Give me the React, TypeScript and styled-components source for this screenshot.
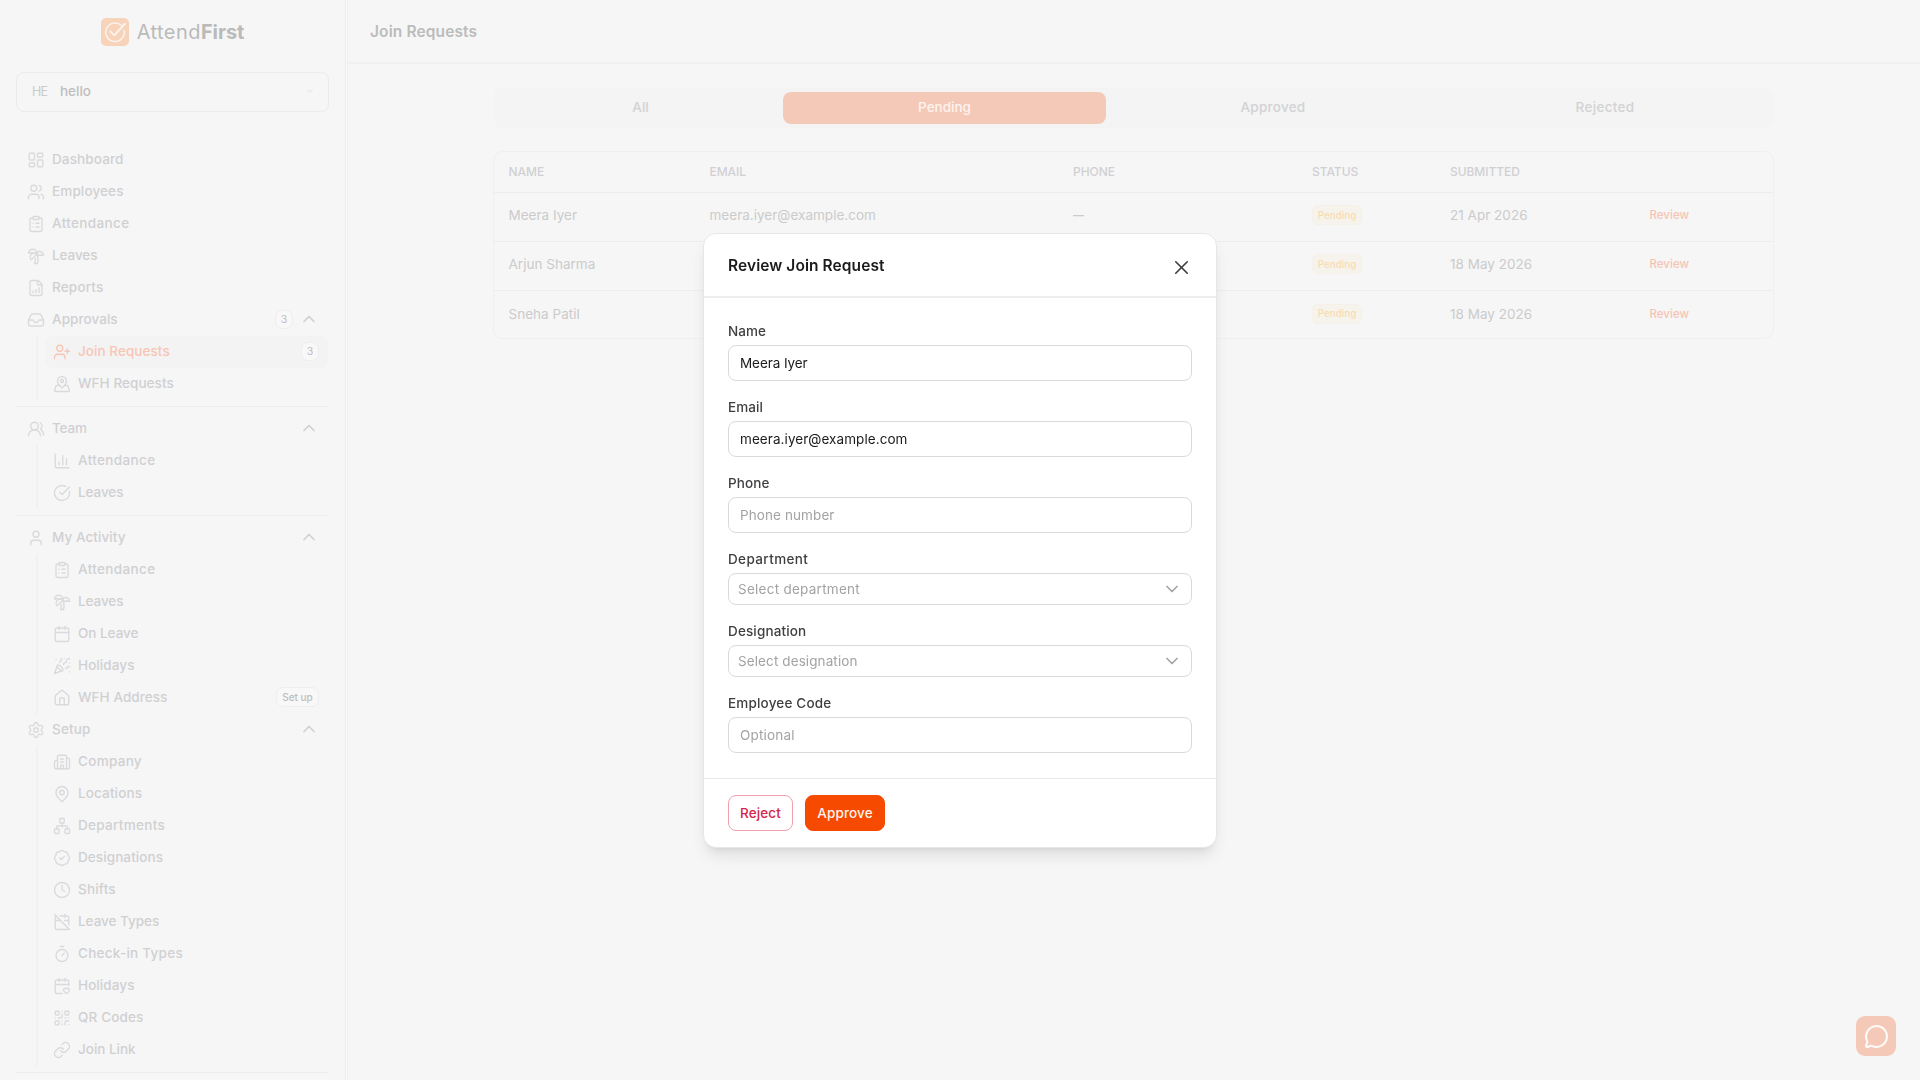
import React from "react";
import styled, { createGlobalStyle, css } from "styled-components";
import {
  BadgeCheck, Building2, Calendar, CalendarHeart, CalendarOff, ChartColumn, ChevronDown, ChevronUp,
  CircleCheckBig, ClipboardList, Clock, FileChartColumnIncreasing, House, Inbox, LayoutDashboard, Link,
  MapPin, MapPinned, MessageCircle, Network, PartyPopper, QrCode, Settings, Timer, TreePalm, User,
  UserPlus, Users, UsersRound, X,
} from "lucide-react";

const GlobalStyle = createGlobalStyle`
  *, *::before, *::after { box-sizing: border-box; }
  body { margin: 0; background: #f6f6f6; font-family: Inter, "Liberation Sans", sans-serif; font-size: 13.5px; }
  button, input { font: inherit; }
`;

const Screen = styled.div`
  display: flex;
  width: 100%;
  height: 1080px;
  overflow: hidden;
  background: #f6f6f6;
`;

/* Sidebar */
const Sidebar = styled.aside`
  flex: none;
  display: flex;
  flex-direction: column;
  width: 348px;
  padding: 12px 18px 0 16px;
  border-right: 1px solid #f1f1f1;
  box-shadow: inset -1px 0 #f8f8f8, inset -2px 0 #eeeeee;
  overflow: hidden;
`;
const Brand = styled.div`
  flex: none;
  display: flex;
  align-items: center;
  justify-content: center;
  gap: 8px;
  height: 40px;
  color: #bababa;
  font-size: 20px;
  letter-spacing: 0.45px;
  b { font-weight: 700; letter-spacing: -0.1px; }
`;
const OrgSelect = styled.div`
  flex: none;
  display: flex;
  align-items: center;
  height: 40px;
  margin-top: 20px;
  padding: 0 13px 2px 15px;
  border: 1px solid #ebebeb;
  border-radius: 8px;
  color: #e0e0e0;
`;
const OrgInitials = styled.span`
  width: 28px;
  color: #cacaca;
  font-size: 12.5px;
  letter-spacing: -0.9px;
`;
const OrgName = styled.span`
  flex: 1;
  color: #bebebe;
  font-weight: 500;
`;
const Nav = styled.nav`
  display: flex;
  flex-direction: column;
  margin-top: 32px;
  width: 312px;
`;
const NavRow = styled.div<{ $sub?: boolean; $active?: boolean }>`
  flex: none;
  display: flex;
  align-items: center;
  gap: 7px;
  height: 32px;
  padding: 0 11px 2px;
  color: #d0d0d2;
  font-weight: 450;
  > svg:first-child { color: #dadadc; flex: none; position: relative; top: 1px; }
  ${(p) => p.$sub && css`padding: 0 9px 2px 8px;`}
  ${(p) => p.$active && css`
    color: #f7c6b5;
    background: #f3f3f3;
    border-radius: 8px;
    > svg:first-child { color: #f7c6b5; }
  `}
`;
const NavText = styled.span<{ $track?: number }>`
  flex: 1;
  white-space: nowrap;
  letter-spacing: ${(p) => (p.$track ?? 0) + 0.06}px;
`;
const SubList = styled.div`
  display: flex;
  flex-direction: column;
  margin-left: 20px;
  padding-left: 7px;
  border-left: 2px solid #f1f1f1;
`;
const Divider = styled.hr`
  flex: none;
  width: 100%;
  height: 1px;
  margin: 6px 0;
  border: 0;
  background: #ededed;
`;
const Count = styled.span`
  display: flex;
  align-items: center;
  justify-content: center;
  width: 18px;
  height: 19px;
  border: 1px solid #eeeeee;
  border-radius: 7px;
  background: #f8f8f8;
  color: #bdbdbd;
  font-size: 10.5px;
  font-weight: 400;
`;
const SetupTag = styled(Count)`
  width: 43px;
  height: 20px;
  color: #bdbdbd;
  font-size: 10px;
  font-weight: 450;
`;
const Caret = styled.span`
  display: flex;
  width: 20px;
  justify-content: center;
  margin-left: -1px;
  margin-right: -2px;
  color: #d0d0d0;
`;

/* Main area */
const Main = styled.main`
  flex: 1;
  min-width: 0;
`;
const Header = styled.header`
  display: flex;
  align-items: center;
  height: 64px;
  padding: 0 22px 0 22px;
  border-bottom: 2px solid #f0f0f0;
  color: #bcbcbc;
  font-size: 15.5px;
  font-weight: 600;
  letter-spacing: 0.12px;
`;
const Content = styled.div`
  width: 1280px;
  margin: 24px auto 0;
`;
const Tabs = styled.div`
  display: grid;
  grid-template-columns: 285px 323px 334px 330px;
  height: 40px;
  padding: 4px;
  border-radius: 8px;
  background: #f4f4f4;
`;
const Tab = styled.div<{ $active?: boolean; $track?: number }>`
  display: flex;
  align-items: center;
  justify-content: center;
  padding-bottom: 2px;
  border-radius: 8px;
  color: ${(p) => (p.$active ? "#fdf3ee" : "#d2d2d3")};
  background: ${(p) => (p.$active ? "#f5c9b8" : "transparent")};
  font-weight: 450;
  letter-spacing: ${(p) => p.$track ?? 0}px;
`;
const TableCard = styled.section`
  width: 1281px;
  margin: 23px 0 0 -1px;
  border: 1px solid #efefef;
  border-radius: 10px;
  overflow: hidden;
`;
const TableRow = styled.div<{ $head?: boolean }>`
  display: grid;
  grid-template-columns: 201px 363.5px 239px 138px 199.5px 1fr;
  align-items: center;
  height: ${(p) => (p.$head ? 40 : 49)}px;
  padding: 0 14.5px ${(p) => (p.$head ? 1 : 4)}px;
  color: ${(p) => (p.$head ? "#d0d0d3" : "#cbcbcb")};
  font-size: ${(p) => (p.$head ? "12px" : "13.5px")};
  font-weight: ${(p) => (p.$head ? 450 : 400)};
  letter-spacing: ${(p) => (p.$head ? "-0.05px" : "0.02px")};
  & + & { border-top: 1px solid #ededed; }
  &:last-child { height: 48px; padding-bottom: 2px; }
`;
const Empty = styled.span`
  font-size: 11px;
  font-weight: 600;
`;
const StatusTag = styled.span`
  display: inline-flex;
  align-items: center;
  justify-content: center;
  width: 50px;
  height: 20px;
  border: 1px solid #f5f1ea;
  border-radius: 6px;
  background: #f6f3ed;
  color: #f8dcb4;
  font-size: 9.8px;
  font-weight: 450;
`;
const ReviewLink = styled.a`
  color: #f6c3b2;
  font-size: 11.5px;
  font-weight: 450;
`;

/* Dialog */
const Backdrop = styled.div`
  position: fixed;
  inset: 0;
  display: flex;
  align-items: center;
  justify-content: center;
`;
const Dialog = styled.section`
  width: 514px;
  height: 615px;
  display: flex;
  flex-direction: column;
  border: 1px solid #e6e6e6;
  border-radius: 13px;
  background: #fff;
  box-shadow: 0 10px 15px -3px rgba(0, 0, 0, 0.1), 0 4px 6px -4px rgba(0, 0, 0, 0.1);
`;
const DialogHeader = styled.header`
  flex: none;
  display: flex;
  align-items: center;
  justify-content: space-between;
  height: 64.5px;
  padding: 0 23px 0 24px;
  border-bottom: 2px solid #eeeeee;
  h2 { margin: 1px 0 0; color: #1b1b1d; font-size: 15.5px; font-weight: 600; letter-spacing: 0.08px; }
  svg { margin-top: 5px; color: #3d3d40; }
`;
const DialogBody = styled.div`
  flex: 1;
  display: flex;
  flex-direction: column;
  gap: 16px;
  padding: 23px 24px;
`;
const Field = styled.label`
  display: flex;
  flex-direction: column;
  gap: 4px;
`;
const FieldLabel = styled.span<{ $track: number }>`
  color: #3f3f42;
  font-weight: 480;
  line-height: 20px;
  letter-spacing: ${(p) => p.$track + 0.03}px;
`;
const box = css<{ $track: number }>`
  width: 100%;
  border: 1px solid #d9d9da;
  border-radius: 8px;
  background: #fff;
  letter-spacing: ${(p) => p.$track}px;
`;
const Input = styled.input<{ $track: number }>`
  ${box}
  height: 36px;
  padding: 0 11px;
  color: #1b1b1d;
  outline: none;
  &::placeholder { color: #a3a3a4; }
`;
const Select = styled.div<{ $track: number }>`
  ${box}
  display: flex;
  align-items: center;
  justify-content: space-between;
  height: 32px;
  padding: 0 9px;
  color: #a3a3a4;
`;
const DialogFooter = styled.footer`
  flex: none;
  display: flex;
  gap: 12px;
  padding: 16px 24px;
  border-top: 1px solid #e8e8e8;
`;
const Button = styled.button<{ $primary?: boolean }>`
  width: ${(p) => (p.$primary ? 80 : 65)}px;
  height: 36px;
  padding: 0;
  border: 1px solid ${(p) => (p.$primary ? "#f54a00" : "#f0a0ad")};
  border-radius: 8px;
  background: ${(p) => (p.$primary ? "#f54a00" : "#fff")};
  color: ${(p) => (p.$primary ? "#fff4ee" : "#d3274a")};
  font-weight: 480;
  letter-spacing: 0.13px;
`;
const ChatButton = styled.button`
  position: fixed;
  right: 24px;
  bottom: 24px;
  display: flex;
  align-items: center;
  justify-content: center;
  width: 40px;
  height: 40px;
  padding: 0;
  border: 0;
  border-radius: 9px;
  background: #f5c9b8;
  color: #fdfaf8;
`;

type Item = { icon: React.ElementType; text: string; track?: number; active?: boolean; badge?: string; tag?: string };
type Group = Item & { items: Item[]; divided?: boolean };

const top: Item[] = [
  { icon: LayoutDashboard, text: "Dashboard", track: 0.07 },
  { icon: Users, text: "Employees", track: 0.07 },
  { icon: ClipboardList, text: "Attendance", track: 0.31 },
  { icon: TreePalm, text: "Leaves", track: -0.15 },
  { icon: FileChartColumnIncreasing, text: "Reports", track: 0.12 },
];
const groups: Group[] = [
  {
    icon: Inbox, text: "Approvals", badge: "3", divided: true,
    items: [
      { icon: UserPlus, text: "Join Requests", active: true, badge: "3" },
      { icon: MapPinned, text: "WFH Requests" },
    ],
  },
  {
    icon: UsersRound, text: "Team", track: -0.25, divided: true,
    items: [
      { icon: ChartColumn, text: "Attendance", track: 0.31 },
      { icon: CircleCheckBig, text: "Leaves", track: -0.15 },
    ],
  },
  {
    icon: User, text: "My Activity",
    items: [
      { icon: ClipboardList, text: "Attendance", track: 0.31 },
      { icon: TreePalm, text: "Leaves", track: -0.15 },
      { icon: Calendar, text: "On Leave", track: -0.08 },
      { icon: PartyPopper, text: "Holidays", track: 0.02 },
      { icon: House, text: "WFH Address", tag: "Set up" },
    ],
  },
  {
    icon: Settings, text: "Setup", track: 0.1, divided: true,
    items: [
      { icon: Building2, text: "Company", track: 0.23 },
      { icon: MapPin, text: "Locations", track: 0.07 },
      { icon: Network, text: "Departments", track: 0.26 },
      { icon: BadgeCheck, text: "Designations", track: 0.03 },
      { icon: Clock, text: "Shifts", track: 0.14 },
      { icon: CalendarOff, text: "Leave Types", track: -0.09 },
      { icon: Timer, text: "Check-in Types", track: 0.2 },
      { icon: CalendarHeart, text: "Holidays", track: 0.02 },
      { icon: QrCode, text: "QR Codes", track: 0.09 },
      { icon: Link, text: "Join Link", track: -0.08 },
    ],
  },
];

const rows = [
  { name: "Meera Iyer", email: "meera.iyer@example.com", date: "21 Apr 2026" },
  { name: "Arjun Sharma", email: "", date: "18 May 2026" },
  { name: "Sneha Patil", email: "", date: "18 May 2026" },
];

const Logo = () => (
  <svg width="28" height="28" viewBox="0 0 28 28" fill="none">
    <rect width="28" height="28" rx="5" fill="#f7d3ba" />
    <path d="M20.3 7.3A9.3 9.3 0 1 0 23.2 12.4" stroke="#fbf3ec" strokeWidth="1.5" strokeLinecap="round" />
    <path d="M9.3 13.4l4 4L24 5.8" stroke="#fbf3ec" strokeWidth="2" strokeLinecap="round" strokeLinejoin="round" />
  </svg>
);

export default function App() {
  return (
    <>
      <GlobalStyle />
      <Screen>
        <Sidebar>
          <Brand>
            <Logo />
            <span>Attend<b>First</b></span>
          </Brand>
          <OrgSelect>
            <OrgInitials>HE</OrgInitials>
            <OrgName>hello</OrgName>
            <ChevronDown size={10} />
          </OrgSelect>
          <Nav>
            {top.map(({ icon: Icon, ...it }) => (
              <NavRow key={it.text}>
                <Icon size={18} strokeWidth={1.8} />
                <NavText $track={it.track}>{it.text}</NavText>
              </NavRow>
            ))}
            {groups.map(({ icon: Icon, ...g }) => (
              <React.Fragment key={g.text}>
                <NavRow>
                  <Icon size={18} strokeWidth={1.8} />
                  <NavText $track={g.track}>{g.text}</NavText>
                  {g.badge && <Count>{g.badge}</Count>}
                  <Caret><ChevronUp size={22} strokeWidth={2} /></Caret>
                </NavRow>
                <SubList>
                  {g.items.map(({ icon: SubIcon, ...it }) => (
                    <NavRow key={it.text} $sub $active={it.active}>
                      <SubIcon size={18} strokeWidth={1.8} />
                      <NavText $track={it.track}>{it.text}</NavText>
                      {it.badge && <Count>{it.badge}</Count>}
                      {it.tag && <SetupTag>{it.tag}</SetupTag>}
                    </NavRow>
                  ))}
                </SubList>
                {g.divided && <Divider />}
              </React.Fragment>
            ))}
          </Nav>
        </Sidebar>
        <Main>
          <Header>Join Requests</Header>
          <Content>
            <Tabs>
              <Tab>All</Tab>
              <Tab $active>Pending</Tab>
              <Tab $track={0.25}>Approved</Tab>
              <Tab $track={0.3}>Rejected</Tab>
            </Tabs>
            <TableCard>
              <TableRow $head>
                <span>NAME</span><span>EMAIL</span><span>PHONE</span><span>STATUS</span><span>SUBMITTED</span><span />
              </TableRow>
              {rows.map((r) => (
                <TableRow key={r.name}>
                  <span>{r.name}</span>
                  <span>{r.email}</span>
                  <Empty>{r.email && "—"}</Empty>
                  <span><StatusTag>Pending</StatusTag></span>
                  <span>{r.date}</span>
                  <ReviewLink>Review</ReviewLink>
                </TableRow>
              ))}
            </TableCard>
          </Content>
        </Main>
      </Screen>
      <ChatButton><MessageCircle size={25} strokeWidth={2} /></ChatButton>
      <Backdrop>
        <Dialog>
          <DialogHeader>
            <h2>Review Join Request</h2>
            <X size={23} strokeWidth={1.7} />
          </DialogHeader>
          <DialogBody>
            <Field><FieldLabel $track={0.05}>Name</FieldLabel><Input $track={-0.08} defaultValue="Meera Iyer" /></Field>
            <Field><FieldLabel $track={0.05}>Email</FieldLabel><Input $track={0.07} defaultValue="meera.iyer@example.com" /></Field>
            <Field><FieldLabel $track={0.05}>Phone</FieldLabel><Input $track={0.1} placeholder="Phone number" /></Field>
            <Field>
              <FieldLabel $track={0.35}>Department</FieldLabel>
              <Select $track={0.26}>Select department<ChevronDown size={20} /></Select>
            </Field>
            <Field>
              <FieldLabel $track={0.11}>Designation</FieldLabel>
              <Select $track={0.1}>Select designation<ChevronDown size={20} /></Select>
            </Field>
            <Field><FieldLabel $track={0.15}>Employee Code</FieldLabel><Input $track={0.18} placeholder="Optional" /></Field>
          </DialogBody>
          <DialogFooter>
            <Button>Reject</Button>
            <Button $primary>Approve</Button>
          </DialogFooter>
        </Dialog>
      </Backdrop>
    </>
  );
}
